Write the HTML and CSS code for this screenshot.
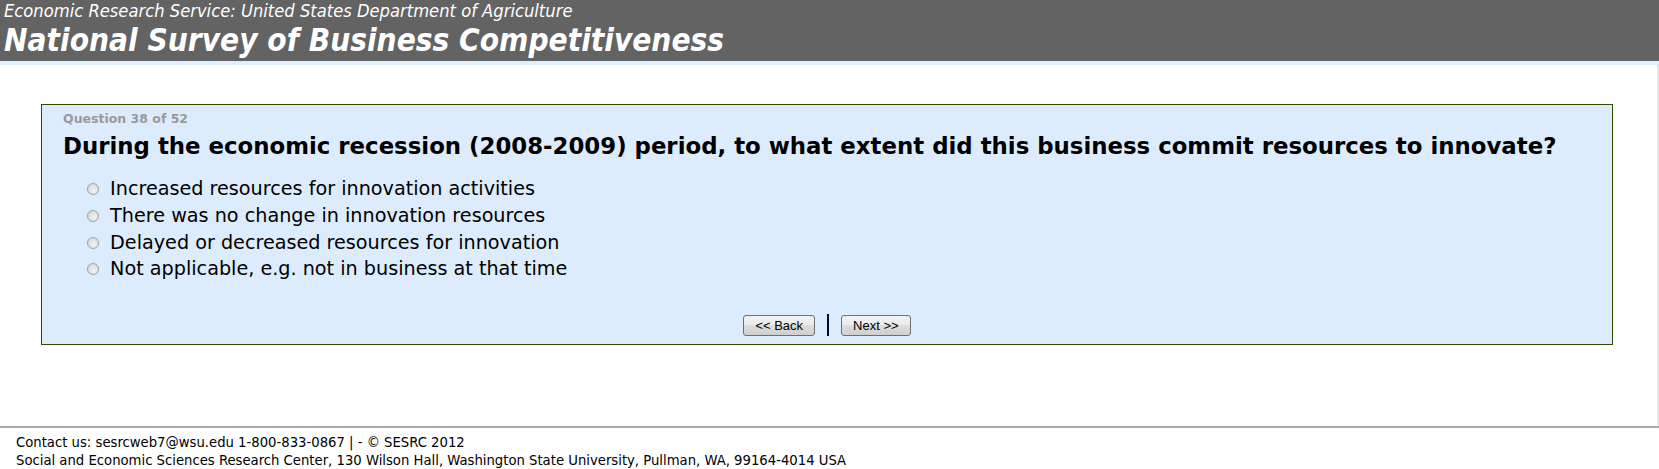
FILE: index.html
```html
<!DOCTYPE html>
<html lang="en">
<head>
	<meta charset="UTF-8">
	<title>National Survey of Business Competitiveness</title>
	<link rel="stylesheet" href="styles.css">
</head>
<body>
	<div class="banner">
		<div class="agency">Economic Research Service: United States Department of Agriculture</div>
		<div class="survey">National Survey of Business Competitiveness</div>
	</div>
	<div class="page">
		<form class="qbox">
			<div class="qnum">Question 38 of 52</div>
			<div class="qtext">During the economic recession (2008-2009) period, to what extent did this business commit resources to innovate?</div>
			<ul class="answers">
				<li><label><input type="radio" name="q38"> Increased resources for innovation activities</label></li>
				<li><label><input type="radio" name="q38"> There was no change in innovation resources</label></li>
				<li><label><input type="radio" name="q38"> Delayed or decreased resources for innovation</label></li>
				<li><label><input type="radio" name="q38"> Not applicable, e.g. not in business at that time</label></li>
			</ul>
			<div class="nav">
				<button type="button" class="btn">&lt;&lt; Back</button>
				<span class="sep"></span>
				<button type="button" class="btn">Next &gt;&gt;</button>
			</div>
		</form>
	</div>
	<div class="footer">
		<div>Contact us: sesrcweb7@wsu.edu 1-800-833-0867 | - &copy; SESRC 2012</div>
		<div>Social and Economic Sciences Research Center, 130 Wilson Hall, Washington State University, Pullman, WA, 99164-4014 USA</div>
	</div>
</body>
</html>
```

FILE: styles.css
```css
/* page */
body{
	margin: 0;
	font-family: "DejaVu Sans", Verdana, sans-serif;
	color: #000;
	background: #fff;
}
.banner{
	background: #636363;
	color: #fff;
	padding: 0 4px;
	height: 61px;
	border-bottom: 4px solid #dfeefd;
}
.agency{
	font-family: "DejaVu Sans Condensed", "DejaVu Sans", sans-serif;
	font-style: italic;
	font-size: 18.2px;
	line-height: 22px;
}
.survey{
	font-family: "DejaVu Sans Condensed", "DejaVu Sans", sans-serif;
	font-style: italic;
	font-weight: bold;
	font-size: 31.3px;
	line-height: 36px;
}
.page{
	padding: 39px 44px 0 41px;
	height: 322px;
	border-right: 2px solid #e6e6e6;
}
.qbox{
	background: #ddecfc;
	border: 1px solid #334d00;
	padding: 6px 21px 0 21px;
	height: 233px;
}
.qnum{
	color: #999;
	font-weight: bold;
	font-size: 12.5px;
	line-height: 16px;
}
.qtext{
	font-weight: bold;
	font-size: 22.85px;
	line-height: 30px;
	margin-top: 4px;
}
.answers{
	list-style: none;
	margin: 15px 0 0;
	padding: 0 0 0 24px;
}
.answers li{
	font-size: 19.2px;
	line-height: 26.8px;
}
.answers input{
	appearance: none;
	-webkit-appearance: none;
	width: 12px;
	height: 12px;
	margin: 0 5px 0 0;
	border: 1px solid #a0a0a0;
	border-radius: 50%;
	background: radial-gradient(circle at 60% 65%, #f2f2f2, #d2d2d2);
	vertical-align: 0;
}
.nav{
	display: flex;
	justify-content: center;
	align-items: center;
	gap: 12px;
	margin-top: 31px;
}
.btn{
	font-family: "Liberation Sans", Arial, sans-serif;
	font-size: 13px;
	height: 21px;
	padding: 0 11px;
	border: 1px solid #707070;
	border-radius: 3px;
	background: linear-gradient(#f2f2f2, #ebebeb 50%, #dddddd 50%, #cfcfcf);
	color: #000;
}
.sep{
	width: 2px;
	height: 22px;
	background: #000028;
}
.footer{
	border-top: 2px solid #aaa;
	padding: 5px 16px 0;
	font-family: "DejaVu Sans Condensed", "DejaVu Sans", sans-serif;
	font-size: 14.7px;
	line-height: 18px;
}
```
